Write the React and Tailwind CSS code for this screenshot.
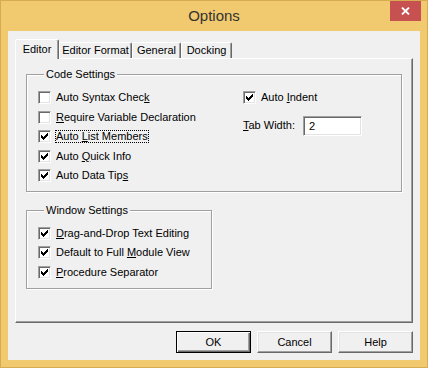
// Options dialog - editor settings (classic Win look)
import React, { useState } from 'react'

const font = { fontFamily: '"Liberation Sans", Arial, sans-serif' }

function Check({ checked }) {
  return (
    <span className="box-border inline-flex w-[13px] h-[13px] shrink-0 bg-white border border-t-[#a0a0a0] border-l-[#a0a0a0] border-b-white border-r-white shadow-[inset_1px_1px_0_#696969,inset_-1px_-1px_0_#e3e3e3]">
      {checked && (
        <svg width="11" height="11" viewBox="0 0 11 11" shapeRendering="crispEdges">
          <rect x="2" y="4" width="1" height="3" fill="#000" />
          <rect x="3" y="5" width="1" height="3" fill="#000" />
          <rect x="4" y="6" width="1" height="3" fill="#000" />
          <rect x="5" y="5" width="1" height="3" fill="#000" />
          <rect x="6" y="4" width="1" height="3" fill="#000" />
          <rect x="7" y="3" width="1" height="3" fill="#000" />
          <rect x="8" y="2" width="1" height="3" fill="#000" />
        </svg>
      )}
    </span>
  )
}

function Option({ checked, focused, children }) {
  return (
    <div className="h-[19.5px] flex items-center">
      <Check checked={checked} />
      {focused ? (
        <span className="ml-[4px] border border-dotted border-black leading-[11px]">{children}</span>
      ) : (
        <span className="ml-[5px] leading-[13px]">{children}</span>
      )}
    </div>
  )
}

function Group({ title, className, children }) {
  return (
    <fieldset className={`border border-[#a0a0a0] shadow-[1px_1px_0_#fff,inset_1px_1px_0_#fff] ${className}`}>
      <legend className="ml-[6px] px-[2px] bg-[#f0f0f0] leading-[13px]">{title}</legend>
      {children}
    </fieldset>
  )
}

function Btn({ children, isDefault }) {
  return (
    <button
      className={`box-border w-[75px] h-[22px] bg-[#f0f0f0] text-[11px] text-black ${
        isDefault
          ? 'border border-black shadow-[inset_1px_1px_0_#fff,inset_-1px_-1px_0_#696969,inset_-2px_-2px_0_#a0a0a0]'
          : 'border border-t-white border-l-white border-r-[#696969] border-b-[#696969] shadow-[inset_-1px_-1px_0_#a0a0a0,inset_1px_1px_0_#e3e3e3]'
      }`}
    >
      {children}
    </button>
  )
}

export default function App() {
  const [tab, setTab] = useState('editor')
  const [tabWidth, setTabWidth] = useState('2')

  const tabs = [
    { id: 'editor', label: 'Editor', w: 'w-[44px]' },
    { id: 'format', label: 'Editor Format', w: 'w-[73px]' },
    { id: 'general', label: 'General', w: 'w-[49px]' },
    { id: 'docking', label: 'Docking', w: 'w-[51px]' }
  ]

  return (
    <div className="box-border w-[428px] h-[368px] bg-[#f1c96e] border border-[#d6ab52] flex flex-col text-[11px] text-black" style={font}>
      {/* Title bar */}
      <div className="relative h-[30px] flex items-center justify-center">
        <span className="text-[15px] text-[#333333] mt-[1px]">Options</span>
        <button className="absolute right-[6px] top-0 w-[31px] h-[20px] bg-[#c75050] flex items-center justify-center">
          <svg width="9" height="8" viewBox="0 0 9 8">
            <path d="M1 0.5 L8 7.5 M8 0.5 L1 7.5" stroke="#fff" strokeWidth="1.8" />
          </svg>
        </button>
      </div>

      {/* Client */}
      <div className="ml-[7px] w-[412px] h-[329px] bg-[#f0f0f0] px-[7px] pt-[8px]">
        {/* Tabs */}
        <div className="flex items-end h-[19px]">
          {tabs.map(t => (
            <button
              key={t.id}
              onClick={() => setTab(t.id)}
              className={`${t.w} box-border flex items-center justify-center bg-[#f0f0f0] border-t border-l border-r border-t-white border-l-white border-r-[#696969] rounded-t-[2px] shadow-[inset_-1px_0_0_#a0a0a0] ${
                tab === t.id ? 'relative z-10 h-[20px] -mb-px pb-[1px]' : 'h-[16px]'
              }`}
            >
              {t.label}
            </button>
          ))}
        </div>

        {/* Panel */}
        <div className="box-border w-[398px] h-[265px] border border-t-white border-l-white border-r-[#696969] border-b-[#696969] shadow-[inset_-1px_-1px_0_#a0a0a0] pl-[10px]">
          <Group title="Code Settings" className="mt-[9px] w-[376px] pl-[11px] pt-[7px] pb-[5px]">
            <div className="flex">
              <div className="w-[205px] flex flex-col">
                <Option>Auto Syntax Chec<u>k</u></Option>
                <Option><u>R</u>equire Variable Declaration</Option>
                <Option checked focused>Auto <u>L</u>ist Members</Option>
                <Option checked>Auto <u>Q</u>uick Info</Option>
                <Option checked>Auto Data Tip<u>s</u></Option>
              </div>
              <div className="flex flex-col">
                <Option checked>Auto <u>I</u>ndent</Option>
                <div className="mt-[8px] flex items-center">
                  <span className="w-[60px]"><u>T</u>ab Width:</span>
                  <input
                    value={tabWidth}
                    onChange={e => setTabWidth(e.target.value)}
                    className="box-border w-[59px] h-[20px] bg-white pl-[5px] text-[11px] outline-none border border-t-[#a0a0a0] border-l-[#a0a0a0] border-b-white border-r-white shadow-[inset_1px_1px_0_#696969,inset_-1px_-1px_0_#e3e3e3]"
                  />
                </div>
              </div>
            </div>
          </Group>

          <Group title="Window Settings" className="mt-[12px] w-[186px] pl-[11px] pt-[7px] pb-[6px]">
            <Option checked><u>D</u>rag-and-Drop Text Editing</Option>
            <Option checked>Default to Full <u>M</u>odule View</Option>
            <Option checked><u>P</u>rocedure Separator</Option>
          </Group>
        </div>

        {/* Buttons */}
        <div className="mt-[8px] flex justify-end gap-[6px]">
          <Btn isDefault>OK</Btn>
          <Btn>Cancel</Btn>
          <Btn>Help</Btn>
        </div>
      </div>
    </div>
  )
}
